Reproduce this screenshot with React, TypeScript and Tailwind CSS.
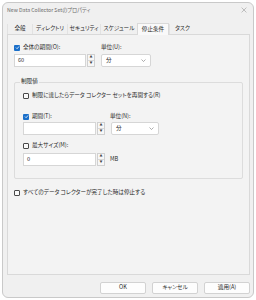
import React from 'react';

const font = { fontFamily: '"Noto Sans CJK JP", "Noto Sans", sans-serif', fontFeatureSettings: '"palt"' };

function Check({ checked }: { checked?: boolean }) {
  if (checked) {
    return (
      <span className="w-[6px] h-[6px] rounded-[1px] bg-[#1a6fc9] flex items-center justify-center shrink-0">
        <svg width="5" height="5" viewBox="0 0 10 10">
          <path d="M2 5.2 L4.2 7.4 L8.2 2.8" stroke="#fff" strokeWidth="1.6" fill="none" />
        </svg>
      </span>
    );
  }
  return <span className="w-[6px] h-[6px] rounded-[1px] border border-[#4a4a4a] bg-[#fafafa] shrink-0" />;
}

function Spin() {
  return (
    <div className="w-[8px] h-[13px] flex flex-col border border-[#d0d0d0] bg-[#f7f7f7] ml-[1px]">
      <div className="flex-1 flex items-center justify-center text-[3px] leading-none text-[#444]">▲</div>
      <div className="h-px bg-[#d8d8d8]" />
      <div className="flex-1 flex items-center justify-center text-[3px] leading-none text-[#444]">▼</div>
    </div>
  );
}

function Select({ w }: { w: string }) {
  return (
    <div className={`${w} h-[13px] bg-white border border-[#d6d6d6] rounded-[2px] flex items-center justify-between pl-[4px] pr-[4px]`}>
      <span>分</span>
      <svg width="5" height="3" viewBox="0 0 10 6">
        <path d="M1 1 L5 5 L9 1" stroke="#777" strokeWidth="1.2" fill="none" />
      </svg>
    </div>
  );
}

const tabs = [
  { label: '全般', w: 'w-[25px]' },
  { label: 'ディレクトリ', w: 'w-[35px]' },
  { label: 'セキュリティ', w: 'w-[33px]' },
  { label: 'スケジュール', w: 'w-[37px]' },
  { label: '停止条件', w: 'w-[32px]', active: true },
  { label: 'タスク', w: 'w-[26px]' },
];

export default function App() {
  return (
    <div className="w-[256px] h-[300px] bg-white p-[2px] text-[5.6px] leading-none text-[#2b2b2b]" style={font}>
      <div className="w-[252px] h-[296px] bg-[#f0f0f0] border border-[#c9c9c9] rounded-[6px] flex flex-col">
        <div className="h-[14px] flex items-center justify-between pl-[4px] pr-[6px] text-[#6a6a6a] text-[5.2px]">
          <span>New Data Collector Setのプロパティ</span>
          <svg width="6" height="6" viewBox="0 0 10 10">
            <path d="M1 1 L9 9 M9 1 L1 9" stroke="#9a9a9a" strokeWidth="1" />
          </svg>
        </div>

        <div className="ml-[4px] mt-[6px] h-[11px] flex items-end">
          {tabs.map((t) => (
            <div
              key={t.label}
              className={`${t.w} flex items-center justify-center ${
                t.active
                  ? 'h-[12px] -mb-px bg-[#f9f9f9] border border-b-0 border-[#d9d9d9] z-10 relative'
                  : 'h-[10px] border-l border-[#e2e2e2]'
              }`}
            >
              {t.label}
            </div>
          ))}
        </div>

        <div className="ml-[4px] w-[243px] h-[241px] border border-[#d9d9d9] bg-[#f3f3f3] pl-[6px] pt-[9px]">
          <div className="h-[7px] flex items-center">
            <div className="w-[87px] flex items-center gap-[3px]">
              <Check checked />
              <span>全体の期間(O):</span>
            </div>
            <span>単位(U):</span>
          </div>
          <div className="mt-[3px] flex items-center">
            <div className="w-[72px] h-[13px] bg-white border border-[#d6d6d6] flex items-center pl-[3px]">60</div>
            <Spin />
            <div className="ml-[6px]">
              <Select w="w-[50px]" />
            </div>
          </div>

          <div className="relative mt-[15px] w-[229px] h-[97px] border border-[#dcdcdc] rounded-[2px] pl-[8px] pt-[9px]">
            <span className="absolute -top-[4px] left-[5px] px-[1px] bg-[#f3f3f3]">制限値</span>
            <div className="h-[7px] flex items-center gap-[3px]">
              <Check />
              <span>制限に達したらデータ コレクター セットを再開する(R)</span>
            </div>
            <div className="mt-[14px] h-[7px] flex items-center">
              <div className="w-[87px] flex items-center gap-[3px]">
                <Check checked />
                <span>期間(T):</span>
              </div>
              <span>単位(N):</span>
            </div>
            <div className="mt-[2px] flex items-center">
              <div className="w-[73px] h-[13px] bg-white border border-[#d6d6d6]" />
              <Spin />
              <div className="ml-[6px]">
                <Select w="w-[48px]" />
              </div>
            </div>
            <div className="mt-[7px] h-[7px] flex items-center gap-[3px]">
              <Check />
              <span>最大サイズ(M):</span>
            </div>
            <div className="mt-[4px] flex items-center">
              <div className="w-[73px] h-[13px] bg-white border border-[#d6d6d6] flex items-center pl-[3px]">0</div>
              <Spin />
              <span className="ml-[5px]">MB</span>
            </div>
          </div>

          <div className="mt-[10px] h-[7px] flex items-center gap-[3px]">
            <Check />
            <span>すべてのデータ コレクターが完了した時は停止する</span>
          </div>
        </div>

        <div className="mt-[7px] flex justify-end gap-[6px] pr-[3px]">
          {['OK', 'キャンセル', '適用(A)'].map((b) => (
            <div
              key={b}
              className="w-[46px] h-[12px] bg-[#fdfdfd] border border-[#d2d2d2] rounded-[2px] flex items-center justify-center"
            >
              {b}
            </div>
          ))}
        </div>
      </div>
    </div>
  );
}
